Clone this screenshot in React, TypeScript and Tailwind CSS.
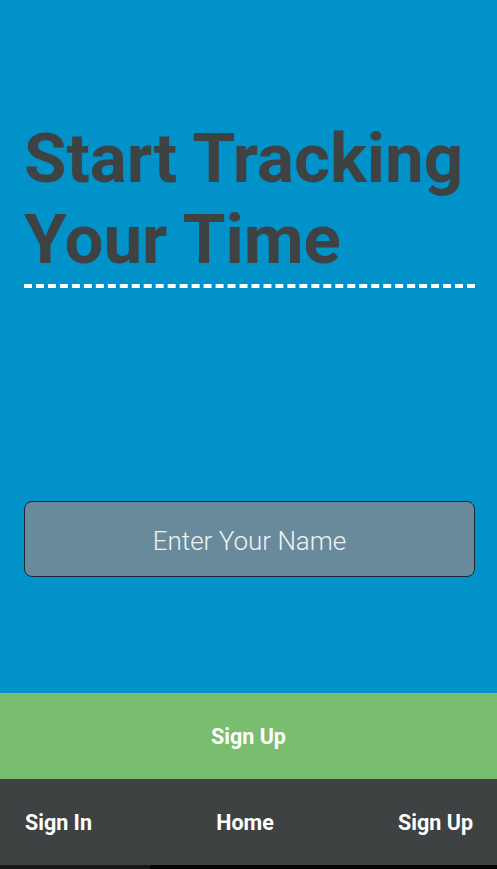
import React from "react"

export default function App() {
  return (
    <div className="flex h-[869px] w-full flex-col font-['Roboto',sans-serif]">
      <div className="flex h-[693px] flex-col bg-[#0092c9] pl-[24px] pr-[22px]">
        <h1 className="mt-[118px] border-b-4 border-dashed border-white pb-[4px] text-[69px] leading-[81px] font-bold text-[#3e4242]">
          Start Tracking Your Time
        </h1>
        <input
          type="text"
          placeholder="Enter Your Name"
          className="mt-[213px] h-[76px] w-full rounded-[8px] border border-[#1a2a30] bg-[#688a9b] pt-[4px] text-center text-[26px] font-light text-white outline-none placeholder:text-[#eef2f4]"
        />
      </div>
      <button
        type="button"
        className="flex h-[86px] items-center justify-center bg-[#79bd6f] pt-[2px] text-[21.5px] font-bold text-white"
      >
        Sign Up
      </button>
      <nav className="flex h-[86px] items-center justify-between bg-[#3f4242] pl-[25px] pr-[24px] pt-[2px] text-[21.5px] font-bold text-white">
        <a>Sign In</a>
        <a>Home</a>
        <a>Sign Up</a>
      </nav>
      <div className="flex h-[4px]">
        <div className="w-[150px] bg-[#161616]" />
        <div className="flex-1 bg-[#050505]" />
      </div>
    </div>
  )
}
